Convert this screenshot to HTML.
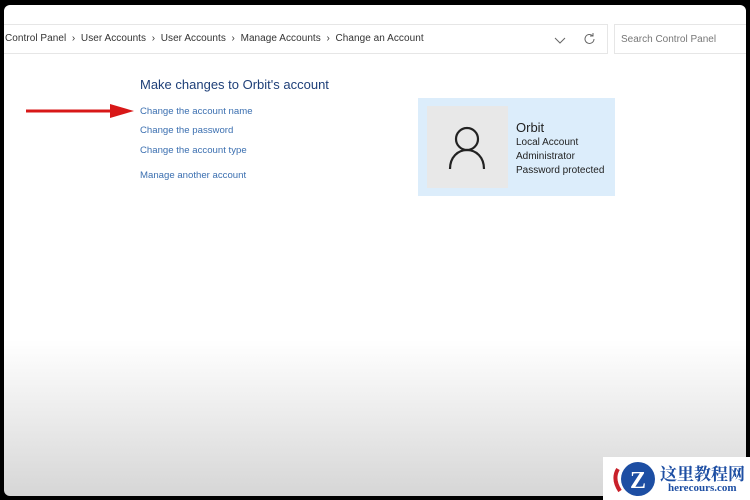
<!DOCTYPE html>
<html><head><meta charset="utf-8"><style>
*{margin:0;padding:0;box-sizing:border-box}
body{width:750px;height:500px;background:#000;position:relative;overflow:hidden;font-family:"Liberation Sans",sans-serif}
.scr{position:absolute;left:4px;top:5px;width:742px;height:491px;border-radius:6px;background:linear-gradient(#fff 0,#fff 335px,#e9e9e9 420px,#d6d6d6 491px);overflow:hidden}
.addr{position:absolute;left:-2px;top:19px;width:606px;height:30px;border:1px solid #e6e6e6;background:#fff}
.crumb{position:absolute;left:2px;top:8px;font-size:10px;color:#333;white-space:nowrap;letter-spacing:0.05px}
.search{position:absolute;left:610px;top:19px;width:140px;height:30px;border:1px solid #e6e6e6;background:#fff;font-size:10px;color:#777;padding:9px 0 0 6px}
h1{position:absolute;left:136px;top:72px;font-size:13px;font-weight:normal;color:#1e3f78}
.l{position:absolute;left:136px;font-size:9.6px;color:#3b6fb0}
.card{position:absolute;left:414px;top:93px;width:197px;height:98px;background:#dcedfb}
.pic{position:absolute;left:9px;top:8px;width:81px;height:82px;background:#e8e8e8}
.info{position:absolute;left:98px;top:23px;font-size:10px;color:#222;line-height:14px}
.logo{position:absolute;left:603px;top:457px;width:147px;height:43px;background:#fff}
</style></head><body>
<div class="scr">
<div class="addr"><div class="crumb">Control Panel &nbsp;›&nbsp; User Accounts &nbsp;›&nbsp; User Accounts &nbsp;›&nbsp; Manage Accounts &nbsp;›&nbsp; Change an Account</div>
<svg style="position:absolute;left:551px;top:10px" width="12" height="10"><path d="M1 3l5 5 5-5" stroke="#666" fill="none"/></svg>
<svg style="position:absolute;left:580px;top:7px" width="14" height="14"><path d="M11 7a4.5 4.5 0 1 1-1.5-3.4M10 1v3h-3" stroke="#666" fill="none"/></svg>
</div>
<div class="search">Search Control Panel</div>
<h1>Make changes to Orbit's account</h1>
<div class="l" style="top:101px">Change the account name</div>
<div class="l" style="top:120px">Change the password</div>
<div class="l" style="top:140px">Change the account type</div>
<div class="l" style="top:165px">Manage another account</div>
<svg style="position:absolute;left:22px;top:98px" width="110" height="16"><path d="M0 8h90" stroke="#d81818" stroke-width="3"/><path d="M84 1l24 7-24 7z" fill="#d81818"/></svg>
<div class="card"><div class="pic"><svg width="81" height="82"><circle cx="40" cy="33" r="11" stroke="#222" stroke-width="2.2" fill="none"/><path d="M23 63c0-12 8-19 17-19s17 7 17 19" stroke="#222" stroke-width="2.2" fill="none"/></svg></div>
<div class="info"><div style="font-size:13px;margin-bottom:1px">Orbit</div>Local Account<br>Administrator<br>Password protected</div></div>
</div>
<div class="logo">
<svg style="position:absolute;left:10px;top:2px" width="50" height="40"><circle cx="25" cy="20" r="17" fill="#1d4ea3"/><path d="M5 10q-6 10 2 22" stroke="#c8202a" stroke-width="4" fill="none"/><text x="17" y="29" font-size="24" font-weight="bold" fill="#fff" font-family="Liberation Serif">Z</text></svg>
<div style="position:absolute;left:57px;top:3px;font-size:17px;font-weight:bold;color:#1d4ea3;font-family:'Liberation Serif','Noto Serif CJK SC',serif">这里教程网</div>
<div style="position:absolute;left:65px;top:25px;font-size:11px;font-weight:bold;color:#1d4ea3;font-family:'Liberation Serif',serif">herecours.com</div>
</div>
</body></html>
